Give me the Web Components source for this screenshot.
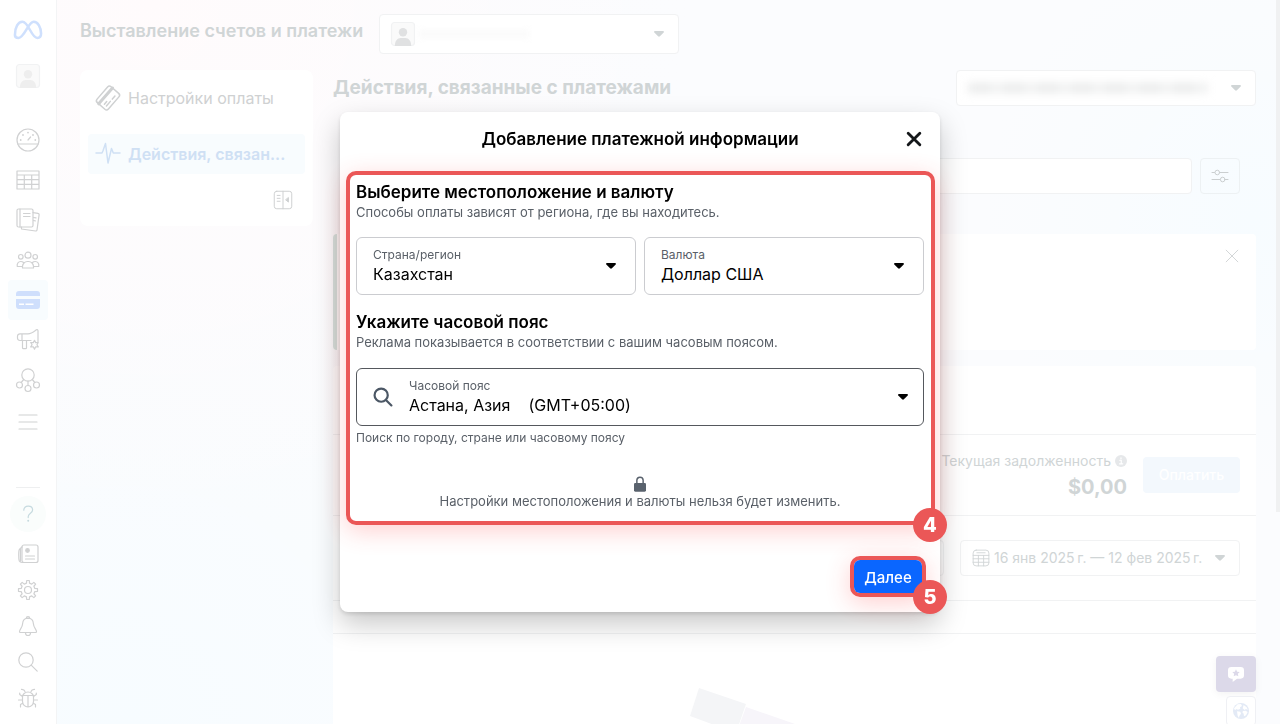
<!DOCTYPE html>
<html lang="ru">
<head>
<meta charset="utf-8">
<meta name="viewport" content="width=device-width, initial-scale=1">
<title>Выставление счетов и платежи</title>
<style>
  :root {
    --text-faded: #d0d5d6;
    --line: #f1f2f3;
    --blue-faded: #cfe0f4;
    --accent: #eb5757;
    --ink: #14171a;
    --muted: #5a6068;
  }

  body {
    margin: 0;
    font-family: Inter, "Liberation Sans", sans-serif;
    color: var(--ink);
    background: #fff;
  }
</style>
</head>
<body>
<billing-app></billing-app>

<script>
// Outline of a toothed wheel, centred in a 24x24 box
function gearPath(teeth, outer, inner, cx = 12, cy = 12) {
  const step = (Math.PI * 2) / teeth;
  const points = [];
  for (let i = 0; i < teeth; i++) {
    const a = i * step - Math.PI / 2;
    [[-0.28, inner], [-0.17, outer], [0.17, outer], [0.28, inner]].forEach(([k, r]) => {
      points.push(`${(cx + r * Math.cos(a + k * step)).toFixed(2)} ${(cy + r * Math.sin(a + k * step)).toFixed(2)}`);
    });
  }
  return `M${points.join('L')}Z`;
}

const ICONS = {
  meta: '<path d="M1.6 16.2C1.6 9.6 4.4 5 8 5c5.400 0 7.600 13.800 12.800 13.800 2.200 0 3.200-1.400 3.200-3.800C24 9.600 21.200 5 17.700 5 13 5 9.700 18.800 4.700 18.800c-2 0-3.100-1-3.100-2.600z" transform="translate(-.8 0)" stroke="#cfe0fd" stroke-width="2.200"/>',
  gauge: '<circle cx="12" cy="12" r="11"/><path d="M1.800 16h20.400M12 12l2.600-3"/><g fill="currentColor" stroke="none"><circle cx="12" cy="4.600" r=".9"/><circle cx="7" cy="7" r=".9"/><circle cx="17" cy="7" r=".9"/><circle cx="4.700" cy="12" r=".9"/><circle cx="19.300" cy="12" r=".9"/></g>',
  table: '<path d="M1 3h22v18H1zM1 7h22M1 11.700h22M1 16.300h22M8.300 7v14M15.700 7v14"/>',
  books: '<rect x="1" y="1" width="16" height="18" rx="1.500"/><path d="M4 1v18M7.500 5.500h6.500M7.500 8.500h6.500M17 4.600l5 .8c.8.100 1.200.700 1.100 1.500L21 22c-.1.800-.7 1.100-1.500 1L5.500 21v-2M17.500 9.500l2.500.4M17.500 12.500l1.800.3"/>',
  people: '<circle cx="12" cy="7.200" r="3"/><circle cx="4.800" cy="8.800" r="2.300"/><circle cx="19.200" cy="8.800" r="2.300"/><path d="M6.500 20v-1.500a5 5 0 0 1 5-5h1a5 5 0 0 1 5 5V20zM6.500 18.500H1.300c-.6-2.600.8-5 3.500-5 1.200 0 2 .3 2.700 1M17.500 18.500h5.200c.6-2.600-.8-5-3.500-5-1.200 0-2 .3-2.700 1"/>',
  card: '<g stroke="none"><path fill="#cfdffc" d="M0 8V6a3 3 0 0 1 3-3h18a3 3 0 0 1 3 3v2zM0 11h24v7a3 3 0 0 1-3 3H3a3 3 0 0 1-3-3z"/><path fill="#fff" d="M3 15.500h5V17H3zM9.500 15.500h8V17h-8z"/></g>',
  megaphone: '<path d="M22 13.500V2.800c0-1-.8-1.500-1.600-1-3 2.200-5 4-8.400 4H4A2.500 2.500 0 0 0 1.500 8v2.300A2.500 2.500 0 0 0 4 12.500h11M6 5.800v6.700M6.500 12.500v7.200c0 .6.500 1 1 1h2c.5 0 1-.4 1-1v-7.200"/><path d="M18.500 12.300l1.200 2.300 2.600-.1-1.400 2.200 1.400 2.200-2.600-.1-1.200 2.300-1.200-2.300-2.600.1 1.400-2.200-1.400-2.200 2.600.1z"/>',
  nodes: '<circle cx="12" cy="7" r="6.200"/><circle cx="3.500" cy="17" r="3"/><circle cx="20.500" cy="17" r="3"/><circle cx="12" cy="20.500" r="3"/><path d="M12 13.200v4.300M7.700 11.500l-2.500 3M16.300 11.500l2.500 3"/>',
  menu: '<path d="M3 7h18M3 14h18M3 21h18"/>',
  help: '<path d="M7.800 8.200c0-2.400 1.800-4 4.400-4s4.400 1.600 4.400 3.900c0 3.300-4.400 3.200-4.400 6.700v.8"/><circle cx="12.200" cy="18.800" r="1" fill="currentColor" stroke="none"/>',
  news: '<rect x="6" y="3" width="16" height="17.500" rx="2"/><path d="M6 5L3.500 7.200C2.500 8 2.500 17 3.300 19c.5 1 1.500 1.500 2.700 1.500h3M4.500 7v12M9.500 14h9M9.500 17h9"/><circle cx="11.500" cy="8.500" r="1.800" fill="currentColor"/>',
  gear: `<path d="${gearPath(8, 9.6, 7)}"/><circle cx="12" cy="12" r="3.500"/>`,
  bell: '<path d="M12 4.200c-3.800 0-5.300 2.800-5.500 6-.2 3.600-3 5-3 7.500 0 .5.300.8.800.8h15.400c.5 0 .8-.3.800-.8 0-2.500-2.800-3.900-3-7.500-.2-3.200-1.700-6-5.500-6zM10.300 4.300a1.700 1.700 0 1 1 3.400 0M9.500 19a2.500 2.500 0 0 0 5 0"/>',
  search: '<circle cx="10" cy="10" r="7.200"/><path d="M15.200 15.200l6 6"/>',
  bug: '<path d="M6.500 11a5.500 5 0 0 1 11 0v4.500a5.500 5.500 0 0 1-11 0zM6.300 9.500h11.400M12 9.500V21M9 5.500C8.500 4 7 3.300 5.500 3.400M15 5.500c.5-1.500 2-2.200 3.500-2.100M6.500 10.500L3.700 8.500V7M17.500 10.500l2.800-2V7M6.500 14H2.500M17.500 14h4M7 17l-2.500 1.500V21M17 17l2.500 1.500V21"/>',
  person: '<rect x=".5" y=".5" width="23" height="23" rx="3" stroke="#f1f2f3" fill="#fafafa"/><g fill="currentColor" stroke="none"><circle cx="12" cy="10.300" r="4.200"/><path d="M3.800 24c0-5 2.400-8 6-8h4.400c3.600 0 6 3 6 8z"/></g>',
  payment: '<g transform="rotate(-49 12 12)"><rect x="1.500" y="4.500" width="21" height="15" rx="2.500"/><path d="M1.500 8.800h21" stroke-width="3"/><path d="M5 16h6M5 13.300h3.500M14 16h4"/></g>',
  pulse: '<path d="M0 11h6l1-2.200L9.500 1.500 12 21l3.500-14.500 1.800 4.500H24"/>',
  collapse: '<rect x="1.500" y="1.500" width="21" height="21" rx="3"/><path d="M12 1.500v21M5 6.500h3.500M5 10h3.500M5 13.500h3.500"/><path fill="currentColor" d="M18.500 9.500v5l-3-2.500z"/>',
  caret: '<path fill="currentColor" stroke="none" d="M8 9h8c.9 0 1.300.9.700 1.500l-3.800 3.800c-.5.500-1.300.5-1.800 0l-3.800-3.800C6.700 9.900 7.100 9 8 9z"/>',
  sliders: '<path d="M4 8.500h2.500M12 8.500h8M4 15.500h8M17.500 15.500H20"/><circle cx="9.300" cy="8.500" r="2.300"/><circle cx="14.700" cy="15.500" r="2.300"/>',
  close: '<path d="M5 5l14 14M19 5L5 19"/>',
  info: '<circle cx="12" cy="12" r="12" fill="#e6e8ea" stroke="none"/><path d="M9.500 10.500h3v7M9 17.700h6.500M12 5.500v2" stroke="#fff" stroke-width="2.400"/>',
  calendar: '<rect x="1.500" y="1.500" width="21" height="21" rx="4"/><path d="M6.500 5h11M1.500 8.500h21M1.500 13h21M1.500 17.700h21M8.500 8.500v14M15.500 8.500v14"/>',
  chat: '<path fill="#fff" stroke="none" d="M5 1.500h14a5 5 0 0 1 5 5V14a5 5 0 0 1-5 5h-5.500L7 24v-5H5a5 5 0 0 1-5-5V6.500a5 5 0 0 1 5-5z"/><path fill="#dcd9e9" stroke="none" d="M12 5l1.700 3.500 3.900.5-2.800 2.700.7 3.800-3.500-1.800-3.500 1.800.7-3.800L6.400 9l3.900-.5z"/>',
  globe: '<circle cx="12" cy="12" r="12" fill="#e3eaf6" stroke="none"/><path fill="#fff" stroke="none" d="M7 2l5-.5 1.500 3-3 2 .5 2-3.500 1.500L5 9 3 11 1.500 8zM6 12.500l5 .5 1 3-2.500 3.500-.5 3-2-3.500zM16 3l4.500 3.500 1.800 3.500-3-1-1.800 1.500L14.500 8zM15 12l4-.5 3 2-2.500 5-3 1.500-.5-4-2-2z"/>',
  lock: '<rect x="3" y="10.500" width="18" height="13" rx="2" fill="currentColor" stroke="none"/><path d="M7.300 11V6.500a4.700 4.700 0 0 1 9.400 0V11" stroke-width="2.200"/>'
};

/**
 * Inline icon
 *
 * Attributes:
 * - name: key of ICONS
 * - size: side in pixels (default: 24)
 * - stroke: line width in the 24-unit box (default: 1.2)
 */
class AppIcon extends HTMLElement {
  constructor() {
    super();
    this.attachShadow({ mode: 'open' });
  }

  connectedCallback() {
    const size = this.getAttribute('size') || 24;
    const stroke = this.getAttribute('stroke') || 1.2;
    this.shadowRoot.innerHTML = `
    <style>
      :host { display: block; flex: none; width: ${size}px; height: ${size}px; }
      svg { display: block; overflow: visible; }
    </style>
    <svg width="${size}" height="${size}" viewBox="0 0 24 24" fill="none" stroke="currentColor"
      stroke-width="${stroke}" stroke-linecap="round" stroke-linejoin="round" aria-hidden="true">${ICONS[this.getAttribute('name')]}</svg>
    `;
  }
}

// Narrow navigation rail at the left edge
class NavRail extends HTMLElement {
  constructor() {
    super();
    this.attachShadow({ mode: 'open' });
  }

  connectedCallback() {
    const items = [
      ['gauge', 'Обзор'], ['table', 'Кампании'], ['books', 'Отчеты'], ['people', 'Аудитории'],
      ['card', 'Платежи'], ['megaphone', 'Настройки рекламы'], ['nodes', 'События'], ['menu', 'Все инструменты']
    ];
    const tools = [
      ['news', 'Новости'], ['gear', 'Настройки'], ['bell', 'Уведомления'], ['search', 'Поиск'], ['bug', 'Сообщить об ошибке']
    ];

    this.shadowRoot.innerHTML = `
    <style>
      :host {
        display: flex;
        flex-direction: column;
        align-items: center;
        box-sizing: border-box;
        padding: 16px 0 8px;
        background: #fff;
        border-right: 1px solid #f3f4f5;
        color: #d0d1d2;
      }

      .avatar { margin: 20px 0 32px; color: #eeeeee; }

      nav, footer { display: flex; flex-direction: column; align-items: center; }

      footer {
        margin-top: auto;
        padding-top: 8px;
      }

      footer::before {
        content: '';
        width: 24px;
        height: 1px;
        margin-bottom: 8px;
        background: #eeeff0;
      }

      a, button {
        display: flex;
        align-items: center;
        justify-content: center;
        width: 40px;
        height: 40px;
        padding: 0;
        border: 0;
        border-radius: 4px;
        background: none;
        color: inherit;
      }

      .logo { height: 28px; }
      footer button { height: 36px; }
      .active { background: #f8fcfe; }

      footer .help {
        width: 36px;
        margin-bottom: 4px;
        border-radius: 50%;
        background: #fafdfc;
        color: #c6dadf;
      }
    </style>

    <a class="logo" href="#" aria-label="Meta"><app-icon name="meta" size="28"></app-icon></a>
    <app-icon class="avatar" name="person"></app-icon>
    <nav>
      ${items.map(([icon, label]) => `<a href="#" aria-label="${label}" class="${icon === 'card' ? 'active' : ''}"><app-icon name="${icon}"></app-icon></a>`).join('')}
    </nav>
    <footer>
      <button class="help" aria-label="Справка"><app-icon name="help"></app-icon></button>
      ${tools.map(([icon, label]) => `<button aria-label="${label}"><app-icon name="${icon}"></app-icon></button>`).join('')}
    </footer>
    `;
  }
}

/**
 * Bordered drop-down with an optional leading slot
 *
 * Attributes:
 * - label: accessible name
 * - value: shown option
 */
class DropBox extends HTMLElement {
  constructor() {
    super();
    this.attachShadow({ mode: 'open' });
  }

  connectedCallback() {
    this.shadowRoot.innerHTML = `
    <style>
      :host {
        display: flex;
        align-items: center;
        gap: 4px;
        box-sizing: border-box;
        height: 36px;
        padding: 0 7px 0 11px;
        border: 1px solid var(--line);
        border-radius: 4px;
        background: #fff;
        color: var(--text-faded);
      }

      select {
        flex: 1;
        min-width: 0;
        padding: 0;
        border: 0;
        appearance: none;
        background: none;
        color: inherit;
        font: 400 14px/20px Inter, sans-serif;
      }
    </style>

    <slot></slot>
    <select aria-label="${this.getAttribute('label')}"><option>${this.getAttribute('value') || ''}</option></select>
    <app-icon name="caret"></app-icon>
    `;
  }
}

// Left menu of the billing section
class SideMenu extends HTMLElement {
  constructor() {
    super();
    this.attachShadow({ mode: 'open' });
  }

  connectedCallback() {
    this.shadowRoot.innerHTML = `
    <style>
      :host {
        display: flex;
        flex-direction: column;
        gap: 16px;
        align-self: start;
        box-sizing: border-box;
        padding: 8px 8px 16px;
        border-radius: 8px;
        background: #fff;
      }

      a {
        display: flex;
        align-items: center;
        gap: 8px;
        height: 40px;
        padding: 0 8px;
        border-radius: 4px;
        color: #cfd1d2;
        font-size: 16px;
        text-decoration: none;
        white-space: nowrap;
      }

      .active {
        background: #f8fcfe;
        color: var(--blue-faded);
        font-weight: 600;
      }

      button {
        align-self: flex-end;
        margin-right: 12px;
        padding: 0;
        border: 0;
        background: none;
        color: #cfd1d2;
      }
    </style>

    <a href="#"><app-icon name="payment" stroke="1.500"></app-icon>Настройки оплаты</a>
    <a href="#" class="active"><app-icon name="pulse" stroke="1.500"></app-icon>Действия, связан...</a>
    <button aria-label="Свернуть меню"><app-icon name="collapse" size="20"></app-icon></button>
    `;
  }
}

// Payment activity: filters, notice and the balance card
class PaymentActivity extends HTMLElement {
  constructor() {
    super();
    this.attachShadow({ mode: 'open' });
  }

  connectedCallback() {
    this.shadowRoot.innerHTML = `
    <style>
      :host {
        display: flex;
        flex-direction: column;
        min-width: 0;
        color: var(--text-faded);
      }

      .top { display: flex; align-items: center; justify-content: space-between; margin-bottom: 52px; }
      h2 { margin: 0; font-size: 19px; line-height: 24px; font-weight: 700; }
      .account { width: 300px; }

      .smudge {
        flex: none;
        width: 240px;
        height: 10px;
        background: repeating-linear-gradient(90deg, #ebecec 0 22px, #f2f3f3 26px 34px);
        filter: blur(4px);
      }

      .search { display: flex; gap: 8px; margin-bottom: 40px; padding: 0 16px; }

      input, .square {
        box-sizing: border-box;
        height: 36px;
        border: 1px solid var(--line);
        border-radius: 4px;
        background: #fff;
      }

      input { flex: 1; min-width: 0; }

      button {
        display: flex;
        align-items: center;
        justify-content: center;
        padding: 0;
        border: 0;
        background: none;
        color: #cbcfd0;
      }

      .square { width: 40px; background: none; border-color: #edf1f3; }

      .notice {
        display: flex;
        justify-content: flex-end;
        align-items: flex-start;
        min-height: 116px;
        box-sizing: border-box;
        margin-bottom: 16px;
        padding: 14px 16px;
        border-left: 4px solid #d6e4e0;
        border-radius: 4px;
        background: #fff;
      }

      .notice button { width: 16px; height: 16px; }

      .card {
        flex: 1;
        display: flex;
        flex-direction: column;
        border-radius: 4px;
        background: #fff;
      }

      .row {
        display: flex;
        align-items: center;
        justify-content: flex-end;
        gap: 16px;
        padding: 0 16px;
        border-bottom: 1px solid var(--line);
      }

      .tabs { height: 68px; }
      .debt { height: 80px; }
      .filters { height: 84px; }
      .columns { height: 32px; }

      .label { display: flex; align-items: center; gap: 4px; font-size: 14px; line-height: 20px; white-space: nowrap; }
      .sum { margin-top: 4px; text-align: right; font-size: 20px; line-height: 24px; font-weight: 700; }

      .pay {
        width: 97px;
        height: 36px;
        border-radius: 4px;
        background: #f3f8fd;
        color: #fff;
        font: 500 14px/20px Inter, sans-serif;
      }

      .status { width: 200px; }
      .dates { width: 280px; }

      .art { flex: none; display: block; width: 210px; margin: 54px auto 0; }
    </style>

    <div class="top">
      <h2>Действия, связанные с платежами</h2>
      <drop-box class="account" label="Рекламный аккаунт"><span class="smudge"></span></drop-box>
    </div>

    <div class="search">
      <input type="search" aria-label="Поиск операций">
      <button class="square" aria-label="Фильтры"><app-icon name="sliders" stroke="1"></app-icon></button>
    </div>

    <section class="notice">
      <button aria-label="Закрыть уведомление"><app-icon name="close" size="20" stroke="1"></app-icon></button>
    </section>

    <section class="card">
      <div class="row tabs"></div>
      <div class="row debt">
        <div>
          <div class="label">Текущая задолженность <app-icon name="info" size="12"></app-icon></div>
          <div class="sum">$0,00</div>
        </div>
        <button class="pay">Оплатить</button>
      </div>
      <div class="row filters">
        <drop-box class="status" label="Тип операции"></drop-box>
        <drop-box class="dates" label="Период" value="16 янв 2025\u202fг. — 12 фев 2025\u202fг."><app-icon name="calendar" size="18"></app-icon></drop-box>
      </div>
      <div class="row columns"></div>
      <svg class="art" viewBox="0 0 210 90" aria-hidden="true">
        <path fill="#f4f5f7" d="M9 0l47 16-10 29L0 28z"/>
        <path fill="#f7f5fa" d="M56 19l150 52v19H30z"/>
      </svg>
    </section>
    `;
  }
}

/**
 * Form field with a small label above its value
 *
 * Attributes:
 * - label, value
 * - search: renders a text box with a magnifier instead of a select
 */
class FloatField extends HTMLElement {
  constructor() {
    super();
    this.attachShadow({ mode: 'open' });
  }

  connectedCallback() {
    const search = this.hasAttribute('search');
    const value = this.getAttribute('value');
    this.shadowRoot.innerHTML = `
    <style>
      :host {
        display: flex;
        align-items: center;
        box-sizing: border-box;
        height: 58px;
        padding: 0 12px 0 16px;
        border: 1px solid #cbccd0;
        border-radius: 6px;
        background: #fff;
      }

      :host([search]) { gap: 15px; padding: 0 8px 0 15px; border-color: #55585d; }

      .lens { color: #4b5765; }
      .body { flex: 1; min-width: 0; }

      label {
        display: block;
        color: var(--muted);
        font-size: 12px;
        line-height: 16px;
      }

      select, input {
        display: block;
        box-sizing: border-box;
        width: 100%;
        height: 22px;
        padding: 0;
        border: 0;
        outline: 0;
        appearance: none;
        background: none;
        color: #000;
        font: 16px/22px Inter, sans-serif;
      }
    </style>

    ${search ? '<app-icon class="lens" name="search" size="22" stroke="2.400"></app-icon>' : ''}
    <div class="body">
      <label for="control">${this.getAttribute('label')}</label>
      ${search
        ? `<input id="control" type="text" role="combobox" aria-expanded="false" value="${value}">`
        : `<select id="control"><option>${value}</option></select>`}
    </div>
    <app-icon name="caret"></app-icon>
    `;
  }
}

/**
 * Red step frame round its content, with a numbered badge on the corner
 *
 * Attributes:
 * - step: number on the badge
 */
class StepFrame extends HTMLElement {
  constructor() {
    super();
    this.attachShadow({ mode: 'open' });
  }

  connectedCallback() {
    this.shadowRoot.innerHTML = `
    <style>
      :host {
        display: block;
        position: relative;
        border: 4px solid var(--accent);
        border-radius: 10px;
        box-shadow: 0 6px 24px rgba(255, 60, 60, .24);
      }

      .badge {
        position: absolute;
        right: var(--badge-right, -16px);
        bottom: -21px;
        width: 34px;
        border-radius: 50%;
        background: var(--accent);
        color: #fff;
        font-size: 20px;
        line-height: 34px;
        font-weight: 800;
        text-align: center;
      }
    </style>

    <slot></slot>
    <span class="badge">${this.getAttribute('step')}</span>
    `;
  }
}

// Dialog that asks for country, currency and time zone
class PaymentDialog extends HTMLElement {
  constructor() {
    super();
    this.attachShadow({ mode: 'open' });
  }

  connectedCallback() {
    this.shadowRoot.innerHTML = `
    <style>
      :host {
        position: fixed;
        inset: 0;
        display: flex;
        align-items: center;
        justify-content: center;
      }

      dialog {
        position: static;
        box-sizing: border-box;
        width: 600px;
        max-width: 100%;
        margin: 0;
        padding: 0 0 15px;
        border: 0;
        border-radius: 8px;
        background: #fff;
        color: #000;
        box-shadow: 0 12px 28px rgba(0, 0, 0, .22), 0 2px 4px rgba(0, 0, 0, .12);
      }

      header {
        display: grid;
        grid-template-columns: 1fr auto 1fr;
        align-items: center;
        height: 54px;
        margin-bottom: 5px;
        padding: 0 16px;
      }

      h2, h3 { margin: 0; font-size: 17px; line-height: 24px; font-weight: 600; }
      h2 { grid-column: 2; }

      .close {
        justify-self: end;
        padding: 0;
        border: 0;
        background: none;
        color: var(--ink);
      }

      .settings { margin: 0 5px 31px 6px; padding: 5px 7px 12px 6px; }

      p { margin: 0; color: var(--muted); font-size: 13px; line-height: 16px; }
      .pair { display: grid; grid-template-columns: 1fr 1fr; gap: 8px; margin: 17px 0 15px; }
      .zone { margin: 18px 0 4px; }
      .hint { font-size: 12px; }

      .locked { display: flex; flex-direction: column; align-items: center; margin-top: 30px; gap: 1px; color: #59626d; }

      .next { width: fit-content; margin: 0 14px 0 auto; --badge-right: -25px; }

      .submit {
        display: block;
        width: 68px;
        height: 33px;
        padding: 2px 0 0;
        border: 0;
        border-radius: 6px;
        background: #0a66ff;
        color: #fff;
        font: 500 15px/20px Inter, sans-serif;
      }
    </style>

    <dialog open aria-labelledby="title">
      <header>
        <h2 id="title">Добавление платежной информации</h2>
        <button class="close" aria-label="Закрыть"><app-icon name="close" size="20" stroke="3.400"></app-icon></button>
      </header>

      <step-frame class="settings" step="4">
        <h3>Выберите местоположение и валюту</h3>
        <p>Способы оплаты зависят от региона, где вы находитесь.</p>
        <div class="pair">
          <float-field label="Страна/регион" value="Казахстан"></float-field>
          <float-field label="Валюта" value="Доллар США"></float-field>
        </div>

        <h3>Укажите часовой пояс</h3>
        <p>Реклама показывается в соответствии с вашим часовым поясом.</p>
        <float-field class="zone" search label="Часовой пояс" value="Астана, Азия&nbsp;&nbsp;&nbsp; (GMT+05:00)"></float-field>
        <p class="hint">Поиск по городу, стране или часовому поясу</p>

        <div class="locked">
          <app-icon name="lock" size="16"></app-icon>
          <p>Настройки местоположения и валюты нельзя будет изменить.</p>
        </div>
      </step-frame>

      <step-frame class="next" step="5"><button class="submit">Далее</button></step-frame>
    </dialog>
    `;
  }
}

// Page shell
class BillingApp extends HTMLElement {
  constructor() {
    super();
    this.attachShadow({ mode: 'open' });
  }

  connectedCallback() {
    this.shadowRoot.innerHTML = `
    <style>
      :host {
        display: grid;
        grid-template-columns: 57px 1fr;
        position: relative;
        height: 100vh;
        overflow: hidden;
        background:
          radial-gradient(circle at 12% 0, #fffbfc 0, rgba(255, 251, 252, 0) 40%),
          radial-gradient(circle at 10% 100%, #f7fcff 0, rgba(247, 252, 255, 0) 35%),
          radial-gradient(circle at 98% 30%, #f7fcff 0, rgba(247, 252, 255, 0) 20%),
          #fbfcfe;
      }

      main {
        display: flex;
        flex-direction: column;
        gap: 16px;
        min-width: 0;
        min-height: 0;
        padding: 14px 24px 0 23px;
      }

      header { display: flex; align-items: center; gap: 16px; height: 40px; }
      h1 { margin: 0; padding-bottom: 6px; color: var(--text-faded); font-size: 18px; line-height: 24px; font-weight: 600; white-space: nowrap; }
      .business { width: 300px; height: 40px; }
      .business app-icon { color: #e0e1e2; }

      .smudge { flex: none; width: 110px; height: 8px; background: #fafafa; filter: blur(3px); }

      .columns { flex: 1; display: grid; grid-template-columns: 233px 1fr; gap: 20px; min-height: 0; }

      /* scroll thumb and floating buttons lie over the page */
      .thumb { position: absolute; top: 0; right: 0; width: 4px; height: 512px; background: #f0f1f2; }

      .floating {
        position: absolute;
        right: 24px;
        bottom: -2px;
        display: flex;
        flex-direction: column;
        align-items: flex-end;
        gap: 4px;
      }

      .floating button {
        display: flex;
        align-items: center;
        justify-content: center;
        box-sizing: border-box;
        width: 30px;
        height: 30px;
        padding: 0;
        border: 1px solid #eff0f4;
        border-radius: 4px;
        background: #fff;
      }

      .floating .chat { width: 40px; height: 36px; border: 0; background: #dcd9e9; box-shadow: 0 2px 8px rgba(0, 0, 0, .05); }
    </style>

    <nav-rail></nav-rail>
    <main>
      <header>
        <h1>Выставление счетов и платежи</h1>
        <drop-box class="business" label="Компания">
          <app-icon name="person"></app-icon>
          <span class="smudge"></span>
        </drop-box>
      </header>
      <div class="columns">
        <side-menu></side-menu>
        <payment-activity></payment-activity>
      </div>
    </main>
    <div class="thumb"></div>
    <div class="floating">
      <button class="chat" aria-label="Отзыв"><app-icon name="chat" size="16"></app-icon></button>
      <button aria-label="Язык"><app-icon name="globe" size="16"></app-icon></button>
    </div>
    <payment-dialog></payment-dialog>
    `;
  }
}

customElements.define('app-icon', AppIcon);
customElements.define('nav-rail', NavRail);
customElements.define('drop-box', DropBox);
customElements.define('side-menu', SideMenu);
customElements.define('payment-activity', PaymentActivity);
customElements.define('float-field', FloatField);
customElements.define('step-frame', StepFrame);
customElements.define('payment-dialog', PaymentDialog);
customElements.define('billing-app', BillingApp);
</script>
</body>
</html>
